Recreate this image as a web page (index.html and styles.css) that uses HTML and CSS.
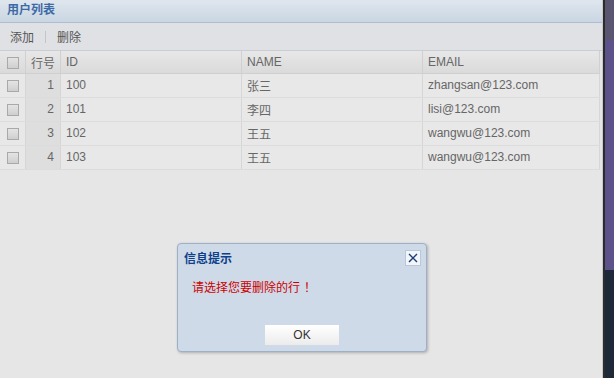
FILE: index.html
```html
<!DOCTYPE html>
<html lang="zh-CN">

<head>
    <meta charset="UTF-8">
    <meta name="viewport" content="width=device-width, initial-scale=1.0">
    <title>用户列表</title>
    <link rel="stylesheet" href="styles.css">
</head>

<body>
    <div id="page">
        <div id="panel">
            <div class="panel-title">用户列表</div>
            <div class="toolbar">
                <a class="tool-btn">添加</a>
                <span class="tool-sep"></span>
                <a class="tool-btn">删除</a>
            </div>
            <table class="grid">
                <thead>
                    <tr>
                        <th class="col-ck"><span class="ck"></span></th>
                        <th class="col-num">行号</th>
                        <th class="col-id">ID</th>
                        <th class="col-name">NAME</th>
                        <th class="col-email">EMAIL</th>
                    </tr>
                </thead>
                <tbody>
                    <tr>
                        <td class="col-ck"><span class="ck"></span></td>
                        <td class="col-num">1</td>
                        <td>100</td>
                        <td>张三</td>
                        <td>zhangsan@123.com</td>
                    </tr>
                    <tr>
                        <td class="col-ck"><span class="ck"></span></td>
                        <td class="col-num">2</td>
                        <td>101</td>
                        <td>李四</td>
                        <td>lisi@123.com</td>
                    </tr>
                    <tr>
                        <td class="col-ck"><span class="ck"></span></td>
                        <td class="col-num">3</td>
                        <td>102</td>
                        <td>王五</td>
                        <td>wangwu@123.com</td>
                    </tr>
                    <tr>
                        <td class="col-ck"><span class="ck"></span></td>
                        <td class="col-num">4</td>
                        <td>103</td>
                        <td>王五</td>
                        <td>wangwu@123.com</td>
                    </tr>
                </tbody>
            </table>

            <div class="msg-window">
                <div class="msg-head">
                    <span class="msg-title">信息提示</span>
                    <span class="msg-close">
                        <svg width="10" height="10" viewBox="0 0 10 10">
                            <path d="M1 1 L9 9 M9 1 L1 9" stroke="#1c3d78" stroke-width="1.4" fill="none" />
                        </svg>
                    </span>
                </div>
                <div class="msg-body">请选择您要删除的行<span class="msg-bang">！</span></div>
                <div class="msg-foot">
                    <button class="msg-ok">OK</button>
                </div>
            </div>
        </div>
        <div id="side">
            <div class="side-top"></div>
            <div class="side-mid"></div>
            <div class="side-bottom"></div>
        </div>
    </div>
</body>

</html>
```

FILE: styles.css
```css
body {
    margin: 0;
    font-family: "Liberation Sans", "Noto Sans CJK SC", sans-serif;
    font-size: 12px;
    background-color: #e6e6e6;
}

#page {
    display: flex;
    width: 614px;
    height: 378px;
    overflow: hidden;
}

#panel {
    width: 602px;
    position: relative;
    background-color: #e6e6e6;
    border-right: 1px solid #c8c8c8;
}

.panel-title {
    height: 22px;
    line-height: 21px;
    padding-left: 7px;
    font-weight: bold;
    color: #3d6aa6;
    background: linear-gradient(#dfe6ee, #c9d6e3);
    border-bottom: 1px solid #aebdcf;
}

.toolbar {
    height: 27px;
    display: flex;
    align-items: center;
    padding-left: 10px;
    color: #555555;
    background-color: #dfe1e4;
    border-bottom: 1px solid #c9ced6;
}

.tool-sep {
    width: 1px;
    height: 12px;
    margin: 0 11px 0 11px;
    background-color: #c4c4c4;
}

.grid {
    width: 600px;
    border-collapse: collapse;
    table-layout: fixed;
    color: #666666;
}

.grid th {
    height: 22px;
    padding: 0 5px;
    text-align: left;
    font-weight: normal;
    background: linear-gradient(#e7e7e7, #dadada);
    border-right: 1px solid #d0d0d0;
    border-bottom: 1px solid #cfcfcf;
}

.grid td {
    height: 22px;
    padding: 0 5px 1px;
    background-color: #e8e8e8;
    border-right: 1px solid #d6d6d6;
    border-bottom: 1px solid #dcdcdc;
}

.grid .col-ck {
    width: 25px;
    padding: 0;
    text-align: center;
}

.grid .col-num {
    width: 34px;
    padding: 0 6px 1px 0;
    text-align: right;
}

.grid th.col-num {
    text-align: center;
    padding: 0;
}

.grid td.col-num {
    background-color: #dedede;
}

.grid .col-id,
.grid .col-name {
    width: 170px;
}

.ck {
    display: inline-block;
    width: 10px;
    height: 10px;
    vertical-align: middle;
    border: 1px solid #a9a9a9;
    background: linear-gradient(#e4e4e4, #cfcfcf);
}

.msg-window {
    position: absolute;
    left: 177px;
    top: 243px;
    width: 248px;
    height: 107px;
    background-color: #cfdae8;
    border: 1px solid #9eb0c8;
    border-radius: 4px;
    box-shadow: 1px 1px 3px rgba(0, 0, 0, 0.25);
}

.msg-head {
    display: flex;
    justify-content: space-between;
    align-items: center;
    padding: 5px 5px 0 6px;
}

.msg-title {
    font-weight: bold;
    color: #0e3f8a;
}

.msg-close {
    width: 14px;
    height: 14px;
    display: flex;
    align-items: center;
    justify-content: center;
    background-color: #f2f5fa;
    border: 1px solid #b9c7da;
}

.msg-body {
    padding: 12px 0 0 14px;
    color: #cc0000;
}

.msg-bang {
    margin-left: 4px;
}

.msg-foot {
    display: flex;
    justify-content: center;
    padding-top: 30px;
}

.msg-ok {
    width: 74px;
    height: 20px;
    padding: 0;
    font-family: "Liberation Sans", sans-serif;
    font-size: 12px;
    color: #333333;
    border: none;
    background: linear-gradient(#ffffff, #ececec);
}

#side {
    flex: 1;
    display: flex;
    flex-direction: column;
    border-left: 2px solid #2c2c2c;
}

.side-top {
    height: 40px;
    background-color: #5a5570;
}

.side-mid {
    height: 230px;
    background-color: #5d5289;
}

.side-bottom {
    flex: 1;
    background-color: #1d2838;
}
```
